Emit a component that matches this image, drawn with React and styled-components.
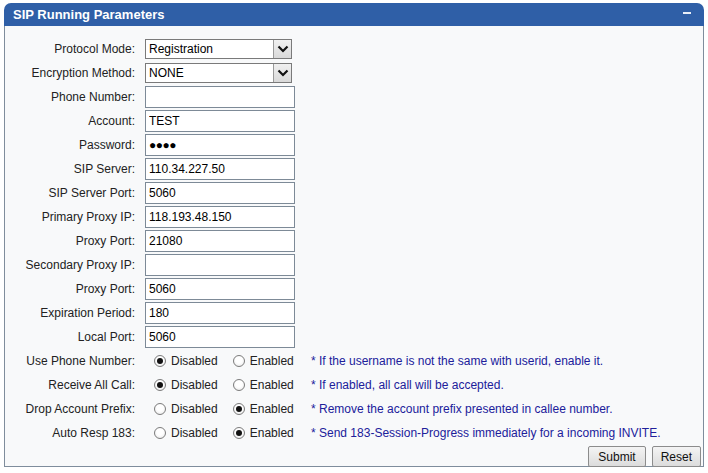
import React from "react";
import styled, { createGlobalStyle } from "styled-components";

const Global = createGlobalStyle`
  html, body { margin: 0; padding: 0; background: #ffffff; }
  body { font-family: "Liberation Sans", Arial, sans-serif; font-size: 12px; color: #222; }
`;

const Panel = styled.div`
  margin: 3px 4px 0 4px;
  width: 700px;
`;

const Header = styled.div`
  height: 23px;
  background: #2f5fa7;
  border-radius: 7px 7px 0 0;
  display: flex;
  align-items: center;
  justify-content: space-between;
  padding: 0 13px 0 9px;
  box-sizing: border-box;
`;

const Title = styled.div`
  color: #ffffff;
  font-weight: bold;
  font-size: 13px;
  font-family: "Liberation Sans", Arial, sans-serif;
`;

const Collapse = styled.span`
  display: block;
  width: 8px;
  height: 2px;
  background: #e8eef8;
  margin-top: -3px;
`;

const Body = styled.div`
  background: #f8f9fa;
  border: 1px solid #7f8d9c;
  border-top: none;
  padding: 11px 2px 0 0;
  height: 441px;
  box-sizing: border-box;
`;

const Row = styled.div`
  display: flex;
  align-items: center;
  height: 24px;
`;

const Label = styled.div`
  width: 130px;
  text-align: right;
  margin-right: 10px;
  white-space: nowrap;
  color: #222;
`;

const Field = styled.div`
  width: 150px;
  display: flex;
  align-items: center;
  white-space: nowrap;
`;

const TextInput = styled.input`
  width: 150px;
  height: 22px;
  box-sizing: border-box;
  border: 1px solid #7d8a97;
  background: #ffffff;
  font-family: "Liberation Sans", Arial, sans-serif;
  font-size: 12px;
  color: #000;
  padding: 0 3px;
  margin: 0;
  outline: none;
  letter-spacing: ${(p) => (p.$masked ? "-0.5px" : "normal")};
`;

const Select = styled.div`
  width: 147px;
  height: 20px;
  box-sizing: border-box;
  border: 1px solid #7a7a7a;
  background: #ffffff;
  display: flex;
  align-items: center;
  justify-content: space-between;
  color: #000;
`;

const SelectText = styled.span`
  padding-left: 3px;
`;

const ArrowBox = styled.span`
  width: 18px;
  height: 18px;
  box-sizing: border-box;
  border-left: 1px solid #9a9a9a;
  background: linear-gradient(#f0f0f0, #d9d9d9);
  display: flex;
  align-items: center;
  justify-content: center;
`;

const RadioGroup = styled.div`
  display: flex;
  align-items: center;
  gap: 15px;
  margin-left: 9px;
`;

const RadioOption = styled.label`
  display: flex;
  align-items: center;
  gap: 5px;
  color: #222;
`;

const RadioCircle = styled.span`
  width: 12px;
  height: 12px;
  box-sizing: border-box;
  border-radius: 50%;
  border: 1px solid #7c7c7c;
  background: radial-gradient(circle at 50% 40%, #ffffff 40%, #e4e4e4 100%);
  display: flex;
  align-items: center;
  justify-content: center;
  &::after {
    content: "";
    width: 6px;
    height: 6px;
    border-radius: 50%;
    background: ${(p) => (p.$checked ? "#111" : "transparent")};
  }
`;

const Note = styled.div`
  margin-left: 16px;
  color: #20209a;
  white-space: nowrap;
`;

const ButtonRow = styled.div`
  display: flex;
  justify-content: flex-end;
  gap: 6px;
  padding-top: 1px;
`;

const Button = styled.button`
  height: 21px;
  box-sizing: border-box;
  border: 1px solid #8c8c8c;
  border-radius: 2px;
  background: linear-gradient(#f4f4f4, #dcdcdc);
  font-family: "Liberation Sans", Arial, sans-serif;
  font-size: 12px;
  color: #111;
  padding: 0 ${(p) => p.$pad}px;
  margin: 0;
`;

const Chevron = () => (
  <svg width="12" height="8" viewBox="0 0 12 8">
    <path d="M1.5 1.5 L6 6 L10.5 1.5" fill="none" stroke="#111" strokeWidth="2.2" />
  </svg>
);

const textFields = [
  ["Phone Number:", ""],
  ["Account:", "TEST"],
  ["Password:", "\u25CF\u25CF\u25CF\u25CF", true],
  ["SIP Server:", "110.34.227.50"],
  ["SIP Server Port:", "5060"],
  ["Primary Proxy IP:", "118.193.48.150"],
  ["Proxy Port:", "21080"],
  ["Secondary Proxy IP:", ""],
  ["Proxy Port:", "5060"],
  ["Expiration Period:", "180"],
  ["Local Port:", "5060"],
];

const radios = [
  ["Use Phone Number:", false, "* If the username is not the same with userid, enable it."],
  ["Receive All Call:", false, "* If enabled, all call will be accepted."],
  ["Drop Account Prefix:", true, "* Remove the account prefix presented in callee number."],
  ["Auto Resp 183:", true, "* Send 183-Session-Progress immediately for a incoming INVITE."],
];

export default function App() {
  return (
    <>
      <Global />
      <Panel>
        <Header>
          <Title>SIP Running Parameters</Title>
          <Collapse />
        </Header>
        <Body>
          <Row>
            <Label>Protocol Mode:</Label>
            <Field>
              <Select>
                <SelectText>Registration</SelectText>
                <ArrowBox><Chevron /></ArrowBox>
              </Select>
            </Field>
          </Row>
          <Row>
            <Label>Encryption Method:</Label>
            <Field>
              <Select>
                <SelectText>NONE</SelectText>
                <ArrowBox><Chevron /></ArrowBox>
              </Select>
            </Field>
          </Row>
          {textFields.map(([label, value, masked], i) => (
            <Row key={i}>
              <Label>{label}</Label>
              <Field>
                <TextInput type="text" defaultValue={value} $masked={masked} readOnly />
              </Field>
            </Row>
          ))}
          {radios.map(([label, enabled, note], i) => (
            <Row key={"r" + i}>
              <Label>{label}</Label>
              <Field>
                <RadioGroup>
                  <RadioOption>
                    <RadioCircle $checked={!enabled} />
                    Disabled
                  </RadioOption>
                  <RadioOption>
                    <RadioCircle $checked={enabled} />
                    Enabled
                  </RadioOption>
                </RadioGroup>
              </Field>
              <Note>{note}</Note>
            </Row>
          ))}
          <ButtonRow>
            <Button $pad={9}>Submit</Button>
            <Button $pad={8}>Reset</Button>
          </ButtonRow>
        </Body>
      </Panel>
    </>
  );
}
